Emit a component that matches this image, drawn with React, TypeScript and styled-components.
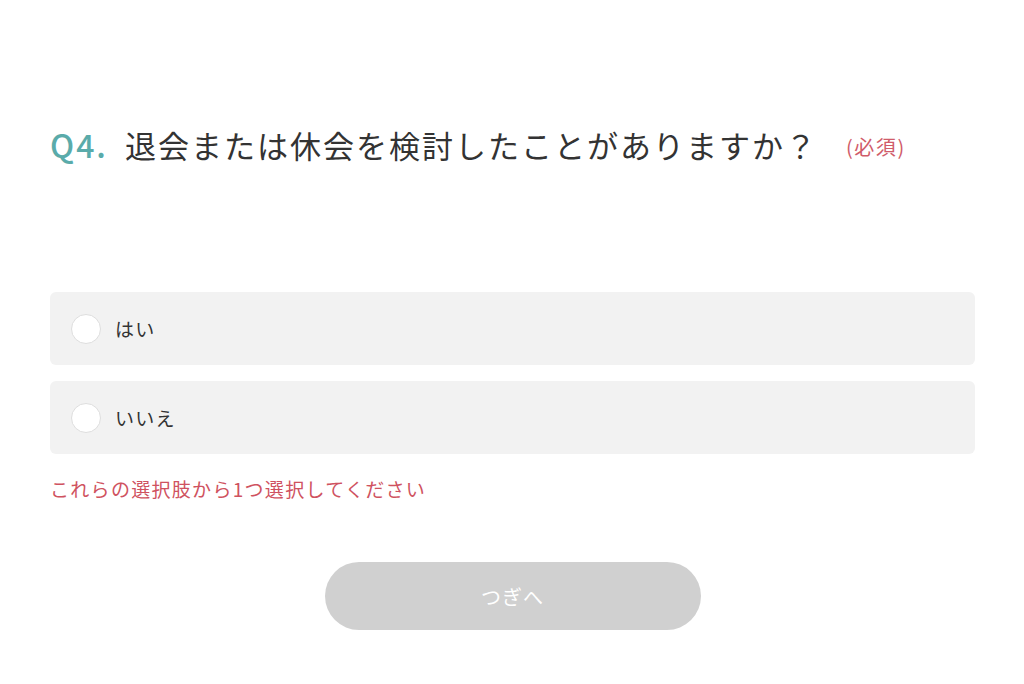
import styled, { createGlobalStyle } from 'styled-components';

const GlobalStyle = createGlobalStyle`
  html, body {
    margin: 0;
    padding: 0;
    background: #fff;
  }
  body {
    font-family: "Noto Sans CJK JP", "Noto Sans", sans-serif;
    color: #333;
  }
`;

const Page = styled.main`
  width: 100%;
  box-sizing: border-box;
  padding: 124px 49px 40px 50px;
`;

const Heading = styled.h2`
  margin: 0;
  display: flex;
  align-items: center;
  height: 40px;
  font-size: 31px;
  font-weight: 400;
  letter-spacing: 2px;
  color: #333;
  white-space: nowrap;
`;

const Number = styled.span`
  color: #5aabaa;
  font-size: 32px;
  font-weight: 500;
  letter-spacing: 2px;
  margin-right: 17px;
`;

const Required = styled.span`
  margin-left: 28px;
  margin-top: 4px;
  font-size: 20px;
  letter-spacing: 1.6px;
  color: #d05c6a;
`;

const Options = styled.div`
  margin-top: 128px;
  display: flex;
  flex-direction: column;
  gap: 16px;
`;

const Option = styled.label`
  display: flex;
  align-items: center;
  height: 73px;
  padding: 0 21px;
  box-sizing: border-box;
  background: #f2f2f2;
  border-radius: 6px;
  cursor: pointer;
`;

const Radio = styled.span`
  width: 30px;
  height: 30px;
  border-radius: 50%;
  background: #fff;
  border: 1px solid #dedede;
  box-sizing: border-box;
  flex-shrink: 0;
`;

const OptionText = styled.span`
  margin-left: 14px;
  font-size: 19px;
  letter-spacing: 1.3px;
  color: #333;
`;

const ErrorText = styled.p`
  margin: 21px 0 0;
  line-height: 28px;
  font-size: 19px;
  letter-spacing: 1.3px;
  color: #cf5260;
`;

const Actions = styled.div`
  margin-top: 59px;
  display: flex;
  justify-content: center;
`;

const NextButton = styled.button`
  width: 376px;
  height: 68px;
  border: none;
  border-radius: 34px;
  background: #d0d0d0;
  color: #fff;
  font-family: inherit;
  font-size: 20px;
  letter-spacing: 1px;
  cursor: not-allowed;
`;

const choices = ['はい', 'いいえ'];

const App = () => {
  return (
    <>
      <GlobalStyle />
      <Page>
        <Heading>
          <Number>Q4.</Number>
          退会または休会を検討したことがありますか？
          <Required>(必須)</Required>
        </Heading>
        <Options>
          {choices.map((c) => (
            <Option key={c}>
              <Radio />
              <OptionText>{c}</OptionText>
            </Option>
          ))}
        </Options>
        <ErrorText>これらの選択肢から1つ選択してください</ErrorText>
        <Actions>
          <NextButton disabled>つぎへ</NextButton>
        </Actions>
      </Page>
    </>
  );
};

export default App;
